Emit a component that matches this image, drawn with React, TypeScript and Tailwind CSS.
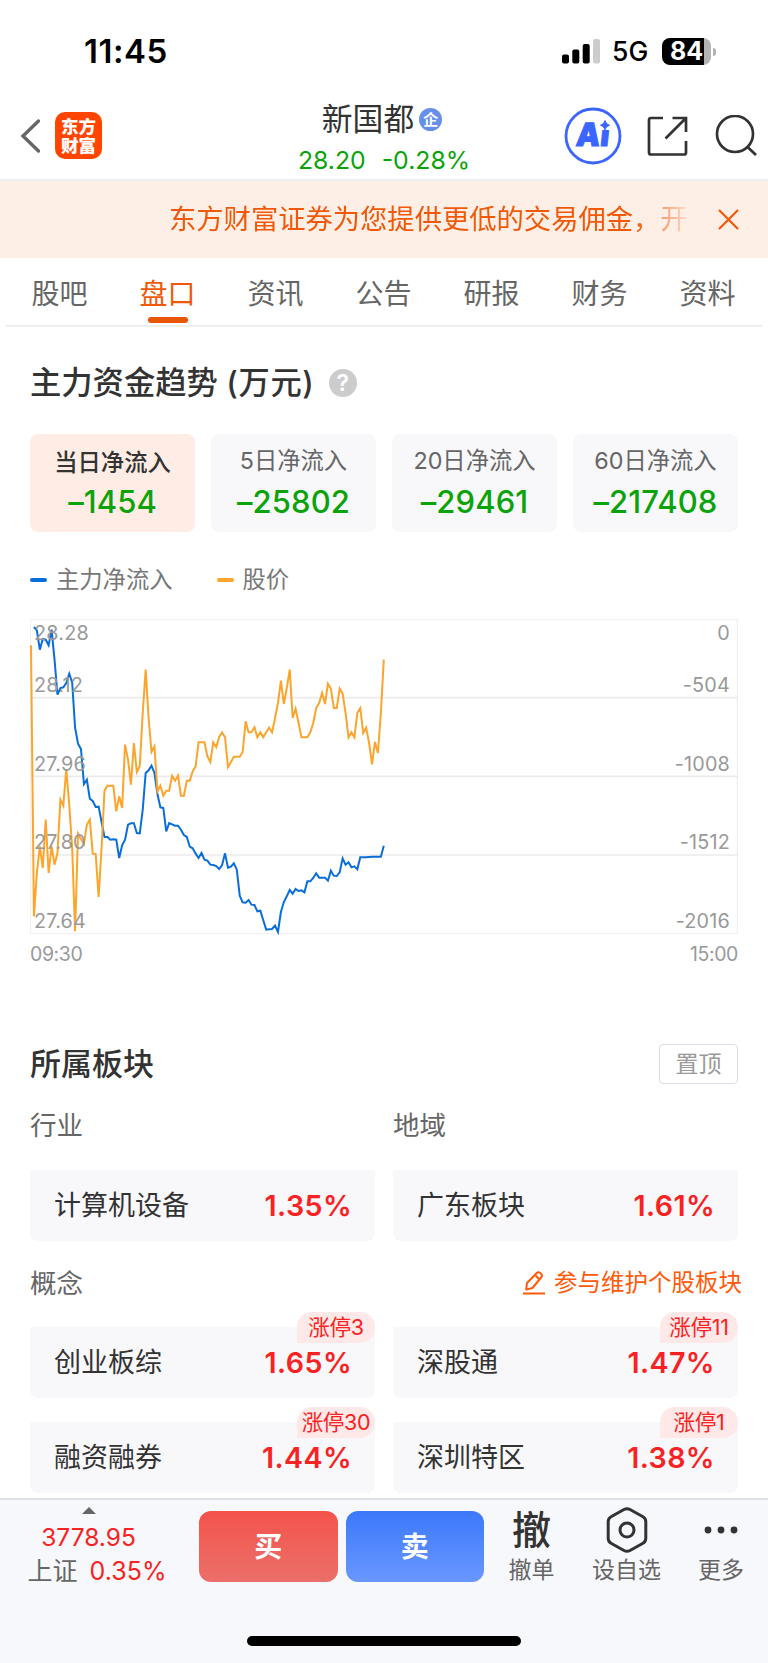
import { clsx } from 'clsx';

const tabs = ['股吧', '盘口', '资讯', '公告', '研报', '财务', '资料'];

const inflows = [
  { label: '当日净流入', value: '–1454' },
  { label: '5日净流入', value: '–25802' },
  { label: '20日净流入', value: '–29461' },
  { label: '60日净流入', value: '–217408' },
];

const axisRows = [
  { price: '28.28', flow: '0' },
  { price: '28.12', flow: '-504' },
  { price: '27.96', flow: '-1008' },
  { price: '27.80', flow: '-1512' },
  { price: '27.64', flow: '-2016' },
];

const sectors = [
  { name: '计算机设备', change: '1.35%' },
  { name: '广东板块', change: '1.61%' },
];

const concepts = [
  { name: '创业板综', change: '1.65%', badge: '涨停3' },
  { name: '深股通', change: '1.47%', badge: '涨停11' },
  { name: '融资融券', change: '1.44%', badge: '涨停30' },
  { name: '深圳特区', change: '1.38%', badge: '涨停1' },
];

// one value per minute, measured down from the top of the plot
const priceSeries = [
  79, 892, 762, 682, 747, 602, 762, 682, 737, 702, 542, 560, 450, 557, 687, 937, 644, 660, 675, 617,
  602, 704, 705, 834, 687, 515, 500, 500, 500, 577, 532, 567, 377, 422, 497, 372, 459, 442, 282, 152,
  297, 399, 382, 517, 500, 530, 515, 515, 470, 485, 470, 530, 530, 485, 485, 457, 442, 370, 370, 370,
  412, 429, 370, 384, 354, 340, 355, 444, 429, 413, 413, 413, 399, 307, 340, 340, 325, 355, 340, 355,
  340, 326, 340, 297, 252, 185, 255, 207, 152, 297, 269, 312, 355, 355, 355, 340, 312, 267, 252, 222,
  255, 194, 209, 267, 267, 209, 224, 282, 355, 340, 355, 282, 267, 342, 326, 372, 436, 369, 402, 282,
  122,
];

const flowSeries = [
  24, 34, 92, 60, 62, 79, 32, 122, 227, 207, 205, 192, 164, 190, 327, 374, 390, 495, 482, 539,
  546, 564, 563, 609, 654, 654, 662, 661, 662, 717, 679, 662, 617, 613, 613, 642, 643, 572, 462, 454,
  440, 462, 525, 565, 567, 637, 612, 616, 620, 620, 632, 648, 654, 683, 688, 704, 717, 702, 722, 725,
  737, 738, 741, 750, 738, 703, 746, 743, 733, 752, 830, 850, 851, 843, 857, 858, 877, 875, 904, 932,
  931, 930, 920, 939, 879, 849, 832, 813, 824, 810, 816, 814, 820, 787, 787, 777, 763, 776, 776, 776,
  785, 755, 770, 771, 760, 718, 737, 730, 745, 742, 751, 715, 715, 715, 714, 713, 713, 713, 713, 680,
];

function toPoints(series: number[], offset: number) {
  return series.map((y, i) => `${(3 + (i + offset) * 8.82).toFixed(1)},${y}`).join(' ');
}

function StatusBar() {
  return (
    <div className="flex h-[95px] items-center pt-[8px] pl-[84px] pr-[52px] text-black">
      <span className="text-[33px] font-semibold leading-none tracking-[0.5px]">11:45</span>
      <div className="ml-auto flex items-center">
        <svg width="39" height="25" viewBox="0 0 39 25">
          <rect x="0" y="15.5" width="7" height="9" rx="2" />
          <rect x="10.3" y="10.5" width="7" height="14" rx="2" />
          <rect x="20.7" y="5" width="7" height="19.5" rx="2" />
          <rect x="31" y="0" width="7" height="24.5" rx="2" fill="#cccccc" />
        </svg>
        <span className="ml-[11px] w-[38px] text-[26.5px] font-medium leading-none">5G</span>
        <div className="ml-[12px] flex h-[27px] w-[49px] items-center justify-center rounded-[8px] bg-[linear-gradient(to_right,#000_0_42px,#b3b3b3_42px)]">
          <span className="text-[25px] font-bold leading-none text-white">84</span>
        </div>
        <div className="ml-[2px] h-[8px] w-[3px] rounded-r-full bg-[#b3b3b3]" />
      </div>
    </div>
  );
}

function Header() {
  return (
    <header className="flex h-[86px] items-start border-b-2 border-[#eeeff0]">
      <div className="flex w-[290px] items-center pt-[17px] pl-[20px]">
        <svg width="20" height="34" viewBox="0 0 20 34" fill="none" stroke="#666" strokeWidth="3.4">
          <path d="M18.500 2 3 17l15.500 15" strokeLinecap="round" />
        </svg>
        <div className="ml-[15px] flex h-[47px] w-[47px] flex-col items-center justify-center rounded-[10px] bg-[#ff4500] text-[17.5px] font-black leading-[19px] text-white">
          <span>东方</span>
          <span>财富</span>
        </div>
      </div>
      <div className="flex w-[188px] flex-col items-center">
        <div className="mr-[4px] flex items-center gap-[5px] pt-[7px]">
          <span className="text-[30.8px] leading-[34px] text-[#333]">新国都</span>
          <span className="flex size-[23px] items-center justify-center rounded-full bg-[#6690e8] text-[15px] font-bold leading-none text-white">
            企
          </span>
        </div>
        <div className="mt-[10px] flex gap-[16px] text-[24.8px] leading-[28px] text-[#0aa30a]">
          <span>28.20</span>
          <span>-0.28%</span>
        </div>
      </div>
      <div className="ml-auto flex items-center pt-[12px] pr-[11px]">
        <svg width="58" height="58" viewBox="0 0 58 58">
          <circle cx="29" cy="29" r="27" fill="none" stroke="#3a66ff" strokeWidth="2.8" />
          <text
            x="15.5"
            y="39.5"
            transform="skewX(-6)"
            className="font-[Inter] text-[32px] font-black"
            fill="#3a66ff"
            stroke="#3a66ff"
            strokeWidth="1"
            textLength="33"
            lengthAdjust="spacingAndGlyphs"
          >
            Ai
          </text>
          {/* the dot of the i is replaced by a spark */}
          <rect x="35" y="12" width="12.500" height="11" fill="#fff" />
          <path d="M41 13.5q1 3.8 4.5 4.7-3.5.9-4.5 4.7-1-3.8-4.5-4.7 3.5-.9 4.5-4.7z" fill="#3a66ff" stroke="#3a66ff" />
        </svg>
        <svg className="ml-[25px]" width="41" height="41" viewBox="0 0 41 41" fill="none" stroke="#333" strokeWidth="2.7">
          <path d="M16 2H4Q2 2 2 4v32.500q0 2 2 2h33q2 0 2-2V25M25.500 2H39v14M39 2 18.500 22.500" />
        </svg>
        <svg className="ml-[27px]" width="42" height="42" viewBox="0 0 42 42" fill="none" stroke="#333" strokeWidth="2.7">
          <circle cx="20" cy="19" r="18" />
          <path d="m32 31.500 9 8.500" />
        </svg>
      </div>
    </header>
  );
}

function Banner() {
  return (
    <div className="flex h-[77px] items-center bg-[#fdeee6] pl-[169px] text-[#f0590a]">
      <div className="mt-[1px] w-[519px] overflow-hidden whitespace-nowrap text-[27.3px] leading-[40px] [mask-image:linear-gradient(to_right,#000_465px,transparent_525px)]">
        东方财富证券为您提供更低的交易佣金，开
      </div>
      <svg className="ml-[30px]" width="21" height="21" viewBox="0 0 21 21" stroke="currentColor" strokeWidth="2.2">
        <path d="m1 1 19 19M20 1 1 20" />
      </svg>
    </div>
  );
}

function Tabs() {
  return (
    <nav className="mx-[6px] flex h-[69px] border-b-2 border-[#efefef]">
      {tabs.map((tab) => {
        const active = tab === '盘口';
        return (
          <div key={tab} className="flex w-[108px] flex-col items-center pt-[16px]">
            <span className={clsx('-ml-[1px] text-[28px] leading-[40px]', active ? 'text-[#f0590a]' : 'text-[#666]')}>
              {tab}
            </span>
            {active && <span className="mt-[3px] h-[6px] w-[40px] rounded-full bg-[#ea5504]" />}
          </div>
        );
      })}
    </nav>
  );
}

function FlowChart() {
  return (
    <div className="mt-[23px]">
      <div className="relative h-[316px]">
        <svg className="block" width="708" height="316" viewBox="0 0 2124 948" fill="none">
          <path d="M1.500 1.500H2122V944H1.500z" stroke="#f1f1f1" strokeWidth="4" />
          <path d="M0 236H2124M0 472H2124M0 708H2124" stroke="#ebebeb" strokeWidth="5" />
          <polyline points={toPoints(flowSeries, 1)} stroke="#0a6ddc" strokeWidth="6" />
          <polyline points={toPoints(priceSeries, 0)} stroke="#fba52c" strokeWidth="6" />
        </svg>
        {/* axis labels sit on top of the plot */}
        <div className="absolute inset-0 flex flex-col pl-[4px] pr-[8px] text-[19.8px] leading-[24px] tracking-[0.2px] text-[#999]">
          {axisRows.map((row, i) => (
            <div
              key={row.price}
              className={clsx('flex justify-between', i === 0 ? 'mt-[2px]' : i === 1 ? 'mt-[28px]' : 'mt-[54.700px]')}
            >
              <span>{row.price}</span>
              <span>{row.flow}</span>
            </div>
          ))}
        </div>
      </div>
      <div className="mt-[7px] flex justify-between text-[19.5px] leading-[24px] tracking-[-0.4px] text-[#999]">
        <span>09:30</span>
        <span>15:00</span>
      </div>
    </div>
  );
}

function FundTrend() {
  return (
    <section className="px-[30px] pt-[33px]">
      <div className="flex items-center">
        <h2 className="text-[31.3px] font-medium leading-[46px] text-[#333]">
          主力资金趋势 <span className="tracking-[0.7px]">(万元)</span>
        </h2>
        <span className="ml-[14px] flex size-[28px] items-center justify-center rounded-full bg-[#ccc] text-[23px] font-semibold leading-none text-white">
          ?
        </span>
      </div>
      <div className="mt-[28px] grid grid-cols-4 gap-[16px]">
        {inflows.map((item, i) => (
          <div
            key={item.label}
            className={clsx('flex h-[98px] flex-col items-center rounded-[8px]', i === 0 ? 'bg-[#ffece4]' : 'bg-[#f8f8fb]')}
          >
            <span
              className={clsx(
                'mt-[12px] leading-[30px]',
                i === 0 ? 'pt-[2px] text-[23.3px] font-medium text-[#333]' : 'pb-[2px] text-[23.3px] text-[#666]',
              )}
            >
              {item.label}
            </span>
            <span className="mt-[5px] text-[31px] font-medium leading-[38px] tracking-[0.1px] text-[#0aa30a]">{item.value}</span>
          </div>
        ))}
      </div>
      <div className="mt-[32px] flex items-center text-[23.3px] leading-[32px] text-[#777]">
        <span className="h-[4px] w-[17px] rounded-full bg-[#0a6ddc]" />
        <span className="ml-[9px]">主力净流入</span>
        <span className="ml-[45px] h-[4px] w-[17px] rounded-full bg-[#fba52c]" />
        <span className="ml-[8px]">股价</span>
      </div>
      <FlowChart />
    </section>
  );
}

type Board = { name: string; change: string; badge?: string };

function BoardCard({ name, change, badge }: Board) {
  return (
    <div className="relative flex h-[71px] items-center justify-between rounded-t-[2px] rounded-b-[8px] bg-[#f8f8fb] pt-[1px] pl-[24px] pr-[23px]">
      <span className="text-[27px] leading-[40px] text-[#333]">{name}</span>
      <span className="text-[28.6px] font-semibold leading-[40px] tracking-[0.4px] text-[#f82222]">{change}</span>
      {badge && (
        <span className="absolute -top-[15px] right-0 flex h-[31px] w-[78px] items-center justify-center rounded-[15px] rounded-bl-none bg-[#ffe8e8] text-[21.5px] leading-none tracking-[-0.3px] text-[#f82222]">
          {badge}
        </span>
      )}
    </div>
  );
}

function Boards() {
  return (
    <section className="px-[30px] pt-[78px]">
      <div className="flex h-[40px] items-center justify-between">
        <h2 className="text-[31px] font-medium leading-[40px] text-[#333]">所属板块</h2>
        <button className="flex h-[40px] w-[79px] items-center justify-center rounded-[4px] border border-[#dcdce6] text-[23px] leading-none text-[#999]">
          置顶
        </button>
      </div>
      <div className="mt-[23px] grid grid-cols-2 gap-x-[18px] text-[26.5px] leading-[36px] text-[#666]">
        <span>行业</span>
        <span>地域</span>
      </div>
      <div className="mt-[27px] grid grid-cols-2 gap-x-[18px]">
        {sectors.map((item) => (
          <BoardCard key={item.name} {...item} />
        ))}
      </div>
      <div className="-mr-[4px] mt-[24px] flex h-[36px] items-center justify-between">
        <span className="text-[26.5px] leading-[36px] text-[#666]">概念</span>
        <span className="flex items-center gap-[9px] text-[23.500px] leading-[32px] text-[#ff5a0a]">
          <svg width="22" height="24" viewBox="0 0 22 24" fill="none" stroke="currentColor" strokeWidth="2" strokeLinejoin="round">
            <path d="M4 12 14 1.800q1.500-1.200 3 0l1.200 1.200q1.400 1.500.3 3L9.500 17l-6.300 1.600zM0 22.500h22" />
            <path d="m12.500 4.500 3.500 3.500" />
          </svg>
          参与维护个股板块
        </span>
      </div>
      <div className="mt-[26px] grid grid-cols-2 gap-x-[18px] gap-y-[24px]">
        {concepts.map((item) => (
          <BoardCard key={item.name} {...item} />
        ))}
      </div>
    </section>
  );
}

function BottomBar() {
  return (
    <footer className="mt-[5px] h-[165px] border-t-2 border-[#dfdfe6] bg-[#f7f8fb]">
      <div className="flex h-[98px]">
        <div className="flex w-[199px] flex-col items-center pt-[7px] pr-[5px]">
          <svg className="mr-[17px]" width="14" height="7" viewBox="0 0 14 7">
            <path d="M7 0 14 7H0z" fill="#666" />
          </svg>
          <span className="mt-[8px] mr-[17px] text-[24.5px] leading-[30px] text-[#f82222]">3778.95</span>
          <span className="mt-[4px] flex gap-[12px] text-[25px] leading-[30px]">
            <span className="text-[#666]">上证</span>
            <span className="text-[#f82222]">0.35%</span>
          </span>
        </div>
        <button className="mt-[11px] flex h-[71px] w-[138.500px] items-center justify-center rounded-[12px] bg-linear-to-b from-[#f4524b] to-[#eb6f6a] text-[28px] font-bold leading-none text-white">
          买
        </button>
        <button className="mt-[11px] ml-[8px] flex h-[71px] w-[138.500px] items-center justify-center rounded-[12px] bg-linear-to-b from-[#3b78fb] to-[#6997ff] text-[28px] font-bold leading-none text-white">
          卖
        </button>
        <div className="flex w-[95px] flex-col items-center text-[23px] leading-[30px] text-[#666]">
          <span className="mt-[7px] h-[48px] text-[39px] font-medium leading-[46px] text-[#333]">撤</span>
          <span>撤单</span>
        </div>
        <div className="flex w-[95px] flex-col items-center text-[23px] leading-[30px] text-[#666]">
          <svg className="mt-[7px] mb-[2px]" width="42" height="46" viewBox="0 0 42 46" fill="none" stroke="#333" strokeWidth="3">
            <path
              d="M18 2.500q3-1.700 6 0l13 7.300q2.800 1.600 2.800 5v16.400q0 3.400-2.800 5l-13 7.300q-3 1.700-6 0L5 36.200q-2.800-1.600-2.800-5V14.800q0-3.400 2.800-5z"
            />
            <circle cx="21" cy="23" r="7" />
          </svg>
          <span>设自选</span>
        </div>
        <div className="flex w-[94px] flex-col items-center text-[23px] leading-[30px] text-[#666]">
          <svg className="mt-[7px] mb-[2px]" width="34" height="46" viewBox="0 0 34 46" fill="#333">
            <circle cx="4" cy="23" r="3.400" />
            <circle cx="17" cy="23" r="3.400" />
            <circle cx="30" cy="23" r="3.400" />
          </svg>
          <span>更多</span>
        </div>
      </div>
      <div className="mx-auto mt-[38px] h-[10px] w-[274px] rounded-full bg-black" />
    </footer>
  );
}

export default function App() {
  return (
    <div className="h-[1663px] w-[768px] overflow-hidden bg-white font-[Inter,'Noto_Sans_CJK_SC',sans-serif]">
      <StatusBar />
      <Header />
      <Banner />
      <Tabs />
      <FundTrend />
      <Boards />
      <BottomBar />
    </div>
  );
}
